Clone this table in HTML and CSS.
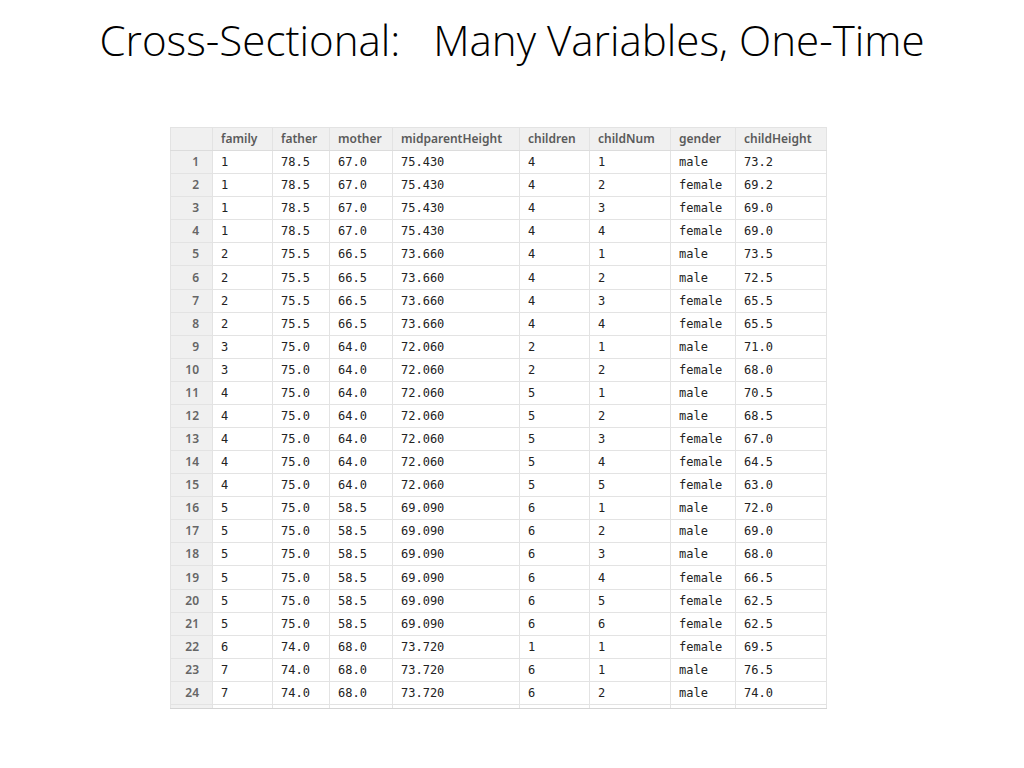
FILE: index.html
```html
<!DOCTYPE html>
<html>
<head>
<meta charset="utf-8">
<link rel="stylesheet" href="styles.css">
</head>
<body>
<h1 class="title">Cross-Sectional:   Many Variables, One-Time</h1>
<div class="grid-wrap">
<table class="grid">
<colgroup>
<col class="c-idx"><col class="c-family"><col class="c-father"><col class="c-mother"><col class="c-mid"><col class="c-children"><col class="c-num"><col class="c-gender"><col class="c-ch">
</colgroup>
<thead>
<tr><th class="idx"></th><th>family</th><th>father</th><th>mother</th><th>midparentHeight</th><th>children</th><th>childNum</th><th>gender</th><th>childHeight</th></tr>
</thead>
<tbody>
<tr><td class="idx">1</td><td>1</td><td>78.5</td><td>67.0</td><td>75.430</td><td>4</td><td>1</td><td>male</td><td>73.2</td></tr>
<tr><td class="idx">2</td><td>1</td><td>78.5</td><td>67.0</td><td>75.430</td><td>4</td><td>2</td><td>female</td><td>69.2</td></tr>
<tr><td class="idx">3</td><td>1</td><td>78.5</td><td>67.0</td><td>75.430</td><td>4</td><td>3</td><td>female</td><td>69.0</td></tr>
<tr><td class="idx">4</td><td>1</td><td>78.5</td><td>67.0</td><td>75.430</td><td>4</td><td>4</td><td>female</td><td>69.0</td></tr>
<tr><td class="idx">5</td><td>2</td><td>75.5</td><td>66.5</td><td>73.660</td><td>4</td><td>1</td><td>male</td><td>73.5</td></tr>
<tr><td class="idx">6</td><td>2</td><td>75.5</td><td>66.5</td><td>73.660</td><td>4</td><td>2</td><td>male</td><td>72.5</td></tr>
<tr><td class="idx">7</td><td>2</td><td>75.5</td><td>66.5</td><td>73.660</td><td>4</td><td>3</td><td>female</td><td>65.5</td></tr>
<tr><td class="idx">8</td><td>2</td><td>75.5</td><td>66.5</td><td>73.660</td><td>4</td><td>4</td><td>female</td><td>65.5</td></tr>
<tr><td class="idx">9</td><td>3</td><td>75.0</td><td>64.0</td><td>72.060</td><td>2</td><td>1</td><td>male</td><td>71.0</td></tr>
<tr><td class="idx">10</td><td>3</td><td>75.0</td><td>64.0</td><td>72.060</td><td>2</td><td>2</td><td>female</td><td>68.0</td></tr>
<tr><td class="idx">11</td><td>4</td><td>75.0</td><td>64.0</td><td>72.060</td><td>5</td><td>1</td><td>male</td><td>70.5</td></tr>
<tr><td class="idx">12</td><td>4</td><td>75.0</td><td>64.0</td><td>72.060</td><td>5</td><td>2</td><td>male</td><td>68.5</td></tr>
<tr><td class="idx">13</td><td>4</td><td>75.0</td><td>64.0</td><td>72.060</td><td>5</td><td>3</td><td>female</td><td>67.0</td></tr>
<tr><td class="idx">14</td><td>4</td><td>75.0</td><td>64.0</td><td>72.060</td><td>5</td><td>4</td><td>female</td><td>64.5</td></tr>
<tr><td class="idx">15</td><td>4</td><td>75.0</td><td>64.0</td><td>72.060</td><td>5</td><td>5</td><td>female</td><td>63.0</td></tr>
<tr><td class="idx">16</td><td>5</td><td>75.0</td><td>58.5</td><td>69.090</td><td>6</td><td>1</td><td>male</td><td>72.0</td></tr>
<tr><td class="idx">17</td><td>5</td><td>75.0</td><td>58.5</td><td>69.090</td><td>6</td><td>2</td><td>male</td><td>69.0</td></tr>
<tr><td class="idx">18</td><td>5</td><td>75.0</td><td>58.5</td><td>69.090</td><td>6</td><td>3</td><td>male</td><td>68.0</td></tr>
<tr><td class="idx">19</td><td>5</td><td>75.0</td><td>58.5</td><td>69.090</td><td>6</td><td>4</td><td>female</td><td>66.5</td></tr>
<tr><td class="idx">20</td><td>5</td><td>75.0</td><td>58.5</td><td>69.090</td><td>6</td><td>5</td><td>female</td><td>62.5</td></tr>
<tr><td class="idx">21</td><td>5</td><td>75.0</td><td>58.5</td><td>69.090</td><td>6</td><td>6</td><td>female</td><td>62.5</td></tr>
<tr><td class="idx">22</td><td>6</td><td>74.0</td><td>68.0</td><td>73.720</td><td>1</td><td>1</td><td>female</td><td>69.5</td></tr>
<tr><td class="idx">23</td><td>7</td><td>74.0</td><td>68.0</td><td>73.720</td><td>6</td><td>1</td><td>male</td><td>76.5</td></tr>
<tr><td class="idx">24</td><td>7</td><td>74.0</td><td>68.0</td><td>73.720</td><td>6</td><td>2</td><td>male</td><td>74.0</td></tr>
<tr class="stub"><td class="idx"></td><td></td><td></td><td></td><td></td><td></td><td></td><td></td><td></td></tr>
</tbody>
</table>
</div>
</body>
</html>
```

FILE: styles.css
```css
html, body {
  margin: 0;
  padding: 0;
  background: #ffffff;
}

.title {
  margin: 0;
  padding-top: 12px;
  height: 113px;
  box-sizing: border-box;
  text-align: center;
  white-space: pre;
  font-family: "Open Sans", "Liberation Sans", sans-serif;
  font-weight: 300;
  font-size: 42.1px;
  line-height: 56px;
  color: #000000;
}

.grid-wrap {
  padding-left: 170px;
  padding-top: 14px;
}

.grid {
  border-collapse: collapse;
  table-layout: fixed;
  width: 656px;
  border: 1px solid #d4d4d4;
}

.c-idx { width: 42px; }
.c-family { width: 60px; }
.c-father { width: 57px; }
.c-mother { width: 63px; }
.c-mid { width: 127px; }
.c-children { width: 70px; }
.c-num { width: 81px; }
.c-gender { width: 65px; }
.c-ch { width: 91px; }

.grid tr {
  height: 23.09px;
}

.grid th,
.grid td {
  border: 1px solid #e3e3e3;
  padding: 0 0 0 8px;
  text-align: left;
  white-space: nowrap;
  overflow: hidden;
  line-height: 14px;
}

.grid th {
  background: #f0f0f0;
  font-family: "Noto Sans", "DejaVu Sans", sans-serif;
  font-weight: 600;
  font-size: 12px;
  color: #5a5a5a;
  border-bottom-color: #dcdcdc;
}

.grid td {
  font-family: "DejaVu Sans Mono", "Liberation Mono", monospace;
  font-size: 12px;
  color: #222222;
}

.grid .idx {
  background: #f0f0f0;
  text-align: right;
  padding: 0 13px 0 0;
  font-family: "Noto Sans", "DejaVu Sans", sans-serif;
  font-weight: 600;
  font-size: 12px;
  color: #666666;
}

.grid tr.stub {
  height: 4px;
}

.grid tr.stub td {
  padding: 0;
  line-height: 0;
  border-bottom: 1px solid #d4d4d4;
}
```
